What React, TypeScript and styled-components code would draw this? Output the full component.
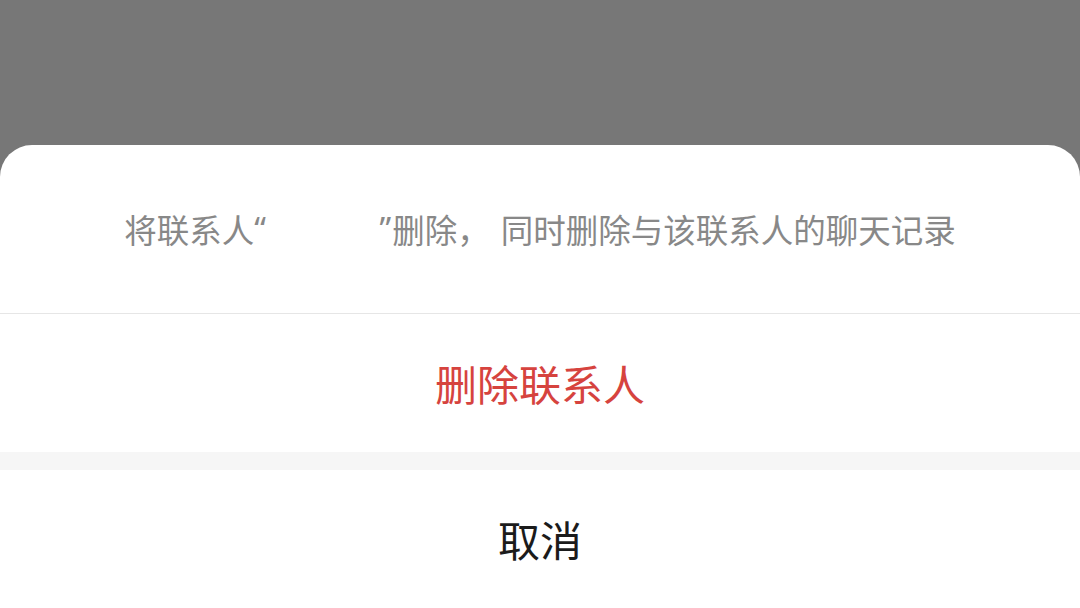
import { FC } from 'react';
import styled, { createGlobalStyle } from 'styled-components';

const GlobalStyle = createGlobalStyle`
  html, body {
    margin: 0;
    padding: 0;
    height: 100%;
    background: #777777;
    font-family: "Noto Sans CJK SC", "Noto Sans", sans-serif;
  }
  #root {
    height: 100%;
  }
`;

const Screen = styled.div`
  height: 608px;
  display: flex;
  flex-direction: column;
  justify-content: flex-end;
  overflow: hidden;
`;

const Sheet = styled.div`
  background: #ffffff;
  border-radius: 32px 32px 0 0;
  display: flex;
  flex-direction: column;
`;

const Message = styled.p`
  margin: 0;
  height: 169px;
  display: flex;
  align-items: center;
  justify-content: center;
  padding-bottom: 2px;
  box-sizing: border-box;
  color: #888888;
  font-size: 32.5px;
  border-bottom: 1px solid #e6e6e6;
  white-space: pre;
`;

// the contact name is blanked out in the screenshot, only the quotes remain
const QuotedName = styled.span`
  display: inline-flex;
  justify-content: space-between;
  width: 137px;
  padding-right: 1px;
  font-family: "Noto Sans", sans-serif;
`;

const Clause = styled.span`
  margin-left: 11px;
`;

const Action = styled.button<{ $danger?: boolean }>`
  height: 138px;
  border: none;
  background: #ffffff;
  font-family: inherit;
  font-size: 42px;
  color: ${p => (p.$danger ? '#d6433e' : '#1b1b1b')};
  padding: 0 0 2px;
  cursor: pointer;
`;

const Gap = styled.div`
  height: 18px;
  background: #f6f6f6;
`;

const App: FC = () => (
  <>
    <GlobalStyle />
    <Screen>
      <Sheet>
        <Message>
          将联系人
          <QuotedName>
            <span>“</span>
            <span>”</span>
          </QuotedName>
          删除，<Clause>同时删除与该联系人的聊天记录</Clause>
        </Message>
        <Action $danger>删除联系人</Action>
        <Gap />
        <Action>取消</Action>
      </Sheet>
    </Screen>
  </>
);

export default App;
